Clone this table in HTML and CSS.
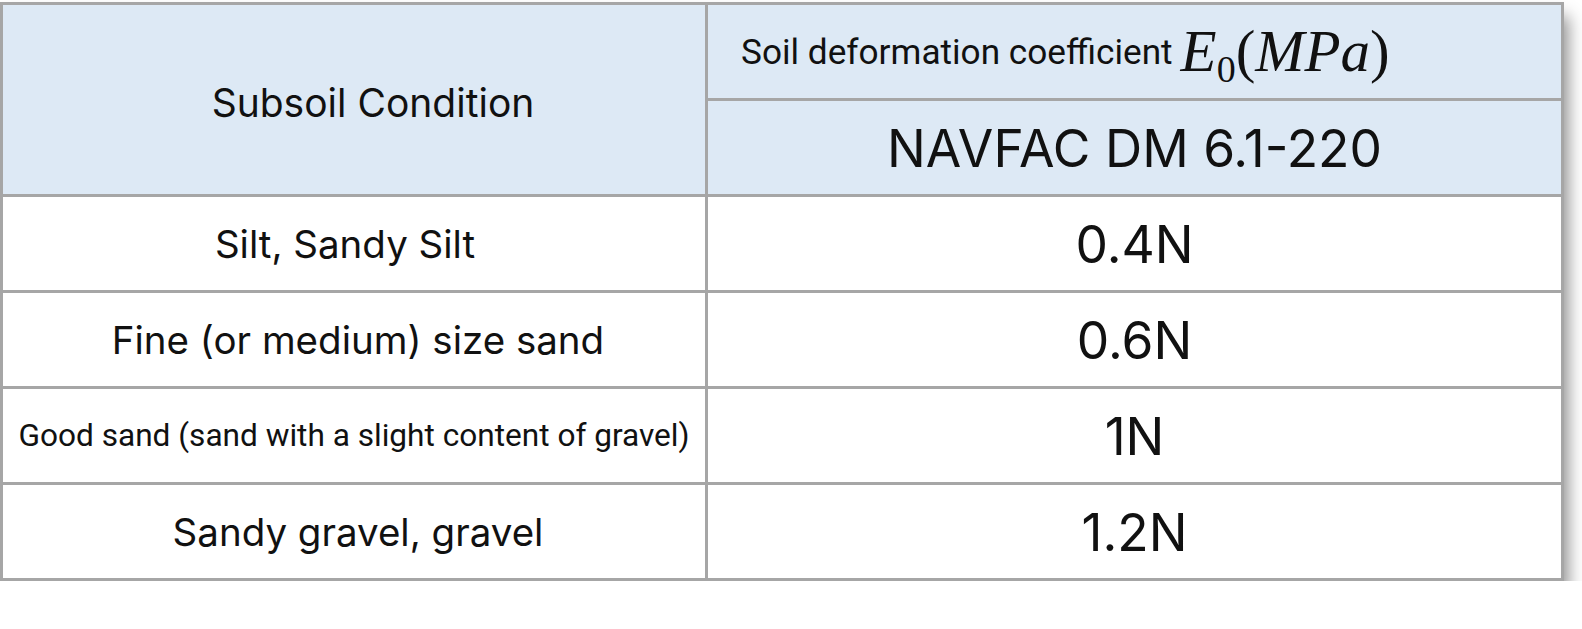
FILE: index.html
```html
<!DOCTYPE html>
<html lang="en">
<head>
<meta charset="utf-8">
<title>Soil deformation coefficient</title>
<link rel="stylesheet" href="styles.css">
</head>
<body>
<div class="sheet">
  <div class="cell head span2 left"><span class="t-head">Subsoil Condition</span></div>
  <div class="cell head right coef-cell"><span class="t-coef">Soil deformation coefficient</span><span class="math"><i>E</i><sub>0</sub>(<i>MPa</i>)</span></div>
  <div class="cell head right"><span class="t-num">NAVFAC DM 6.1-220</span></div>

  <div class="cell left"><span class="t-body t-shift">Silt, Sandy Silt</span></div>
  <div class="cell right"><span class="t-num">0.4N</span></div>

  <div class="cell left"><span class="t-body">Fine (or medium) size sand</span></div>
  <div class="cell right"><span class="t-num">0.6N</span></div>

  <div class="cell left"><span class="t-small">Good sand (sand with a slight content of gravel)</span></div>
  <div class="cell right"><span class="t-num">1N</span></div>

  <div class="cell left"><span class="t-body">Sandy gravel, gravel</span></div>
  <div class="cell right"><span class="t-num">1.2N</span></div>
</div>
</body>
</html>
```
FILE: styles.css
```css
html, body {
  margin: 0;
  padding: 0;
  background: #ffffff;
}

body {
  padding-top: 2px;
  font-family: Inter, "Noto Sans", sans-serif;
  color: #111111;
}

.sheet {
  display: grid;
  grid-template-columns: 702px 853px;
  grid-auto-rows: 93px;
  gap: 3px;
  padding: 3px;
  width: max-content;
  background: #a6a6a6;
  box-shadow: 4px 14px 16px rgba(0, 0, 0, 0.45);
}

.cell {
  background: #ffffff;
  display: flex;
  align-items: center;
  justify-content: center;
  white-space: nowrap;
}

.head {
  background: #dde9f5;
}

.span2 {
  grid-row: span 2;
}

.coef-cell {
  justify-content: flex-start;
  padding-left: 33px;
}

.t-head {
  font-size: 39px;
  padding-left: 38px;
  padding-top: 6px;
}

.t-body {
  font-size: 38.5px;
  padding-left: 8px;
}

.t-shift {
  padding-left: 0;
  padding-right: 18px;
}

.t-small {
  font-family: Roboto, "Liberation Sans", sans-serif;
  font-size: 31.6px;
}

.t-coef {
  font-family: Roboto, "Liberation Sans", sans-serif;
  font-size: 35.2px;
  margin-right: 8px;
}

.math {
  font-family: "Liberation Serif", "DejaVu Serif", serif;
  font-size: 59px;
  line-height: 1;
}

.math sub {
  font-size: 38px;
  vertical-align: -11px;
  line-height: 0;
}

.t-num {
  font-size: 51.5px;
}
```
